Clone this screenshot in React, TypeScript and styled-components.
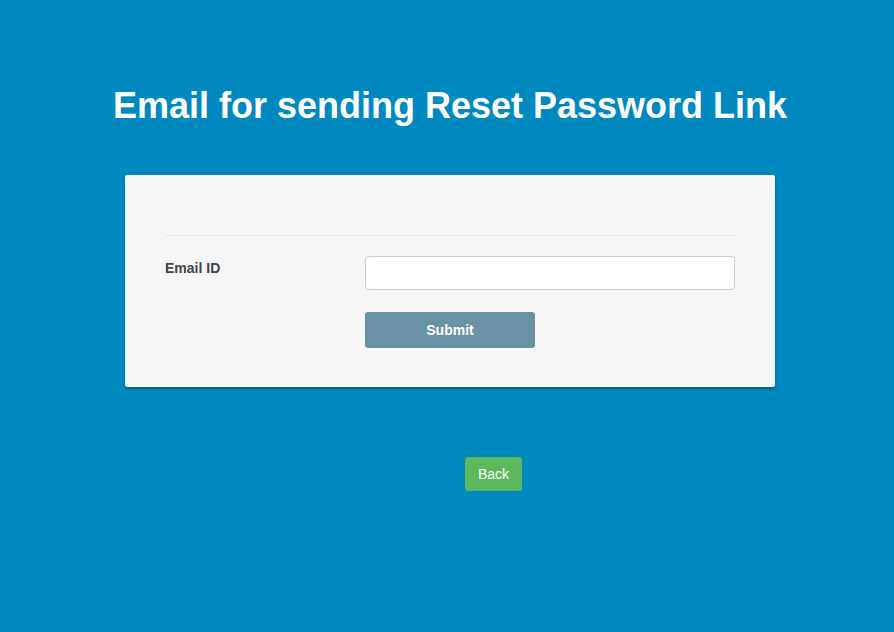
import React from "react";
import styled, { createGlobalStyle } from "styled-components";

const Global = createGlobalStyle`
  html, body { margin: 0; padding: 0; background: #0089bf; }
  body { font-family: "Liberation Sans", Arial, sans-serif; }
`;

const Page = styled.div`
  min-height: 632px;
  background: #0089bf;
  display: flex;
  flex-direction: column;
  align-items: center;
  padding-top: 84px;
  padding-left: 6px;
  box-sizing: border-box;
`;

const Title = styled.h1`
  margin: 0;
  color: #fff;
  font-size: 36px;
  font-weight: bold;
  line-height: 44px;
  text-align: center;
`;

const Card = styled.div`
  margin-top: 47px;
  width: 650px;
  box-sizing: border-box;
  background: #f6f6f6;
  border-radius: 2px;
  box-shadow: 0 2px 3px rgba(0, 0, 0, 0.3);
  padding: 60px 40px 39px;
`;

const Divider = styled.hr`
  margin: 0 0 20px;
  border: 0;
  border-top: 1px solid #e8e8e8;
`;

const Row = styled.div`
  display: flex;
  align-items: flex-start;
`;

const Label = styled.label`
  width: 200px;
  flex: none;
  font-size: 14px;
  font-weight: bold;
  color: #444;
  padding-top: 4px;
`;

const Field = styled.div`
  flex: 1;
  display: flex;
  flex-direction: column;
  gap: 22px;
`;

const Input = styled.input`
  width: 370px;
  height: 34px;
  box-sizing: border-box;
  border: 1px solid #ccc;
  border-radius: 4px;
  background: #fff;
  margin: 0;
`;

const Button = styled.button<{ $bg: string; $w: number; $h: number; $bold?: boolean }>`
  width: ${(p) => p.$w}px;
  height: ${(p) => p.$h}px;
  background: ${(p) => p.$bg};
  color: #fff;
  border: 0;
  border-radius: 3px;
  font-family: "Liberation Sans", Arial, sans-serif;
  font-size: 14px;
  font-weight: ${(p) => (p.$bold ? "bold" : "normal")};
  padding: 0;
  cursor: pointer;
`;

const BackWrap = styled.div`
  margin-top: 70px;
  padding-left: 87px;
`;

export default function App() {
  return (
    <>
      <Global />
      <Page>
        <Title>Email for sending Reset Password Link</Title>
        <Card>
          <Divider />
          <Row>
            <Label>Email ID</Label>
            <Field>
              <Input type="email" />
              <Button $bg="#6993a5" $w={170} $h={36} $bold>
                Submit
              </Button>
            </Field>
          </Row>
        </Card>
        <BackWrap>
          <Button $bg="#5cb85c" $w={57} $h={34}>
            Back
          </Button>
        </BackWrap>
      </Page>
    </>
  );
}
